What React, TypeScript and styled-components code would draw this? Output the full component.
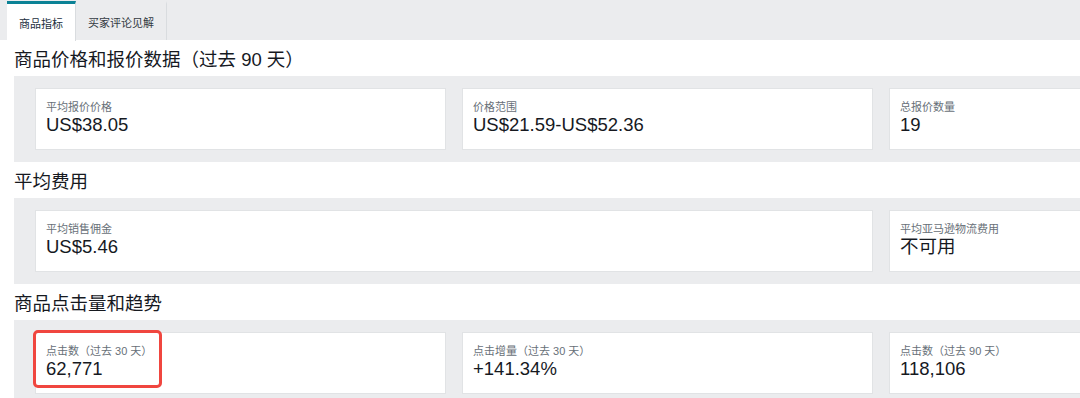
import React from 'react';
import styled, { createGlobalStyle } from 'styled-components';

const colores = {
  gris: '#ebecee',
  borde: '#d9dcdf',
  teal: '#0b8296',
  texto: '#16191f',
  etiqueta: '#687078',
  rojo: '#f0463f',
};

const Global = createGlobalStyle`
  html, body {
    margin: 0;
    padding: 0;
    background: #fff;
    overflow: hidden;
  }
  body {
    font-family: "Liberation Sans", "Noto Sans CJK SC", Arial, sans-serif;
    color: ${colores.texto};
  }
`;

const Pagina = styled.div`
  width: 1335px;
`;

const BarraTabs = styled.div`
  display: flex;
  height: 40px;
  box-sizing: border-box;
  padding: 1px 0 0 7px;
  background: ${colores.gris};
`;

const Tab = styled.div<{ activo?: boolean }>`
  display: flex;
  align-items: center;
  box-sizing: border-box;
  padding: 0 12px;
  font-size: 11px;
  color: ${(p) => (p.activo ? '#232f3e' : '#333a42')};
  background: ${(p) => (p.activo ? '#fff' : 'transparent')};
  border-top: 3px solid ${(p) => (p.activo ? colores.teal : 'transparent')};
  border-right: 1px solid ${colores.borde};
  margin-bottom: ${(p) => (p.activo ? '-1px' : '0')};
`;

const Contenido = styled.div`
  padding: 0 14px;
`;

const Titulo = styled.h2`
  margin: 0;
  height: 36px;
  display: flex;
  align-items: center;
  font-size: 18.5px;
  font-weight: 400;
  color: ${colores.texto};
`;

const Panel = styled.div`
  background: ${colores.gris};
  padding: 12px 21px;
  display: grid;
  grid-template-columns: repeat(3, 1fr);
  gap: 16px;
`;

const Tarjeta = styled.div<{ span?: number }>`
  position: relative;
  grid-column: span ${(p) => p.span ?? 1};
  height: 62px;
  box-sizing: border-box;
  padding: 11px 10px 0;
  background: #fff;
  border: 1px solid #e1e3e5;
`;

const Etiqueta = styled.div`
  font-size: 11px;
  line-height: 14px;
  color: ${colores.etiqueta};
`;

const Valor = styled.div`
  font-size: 18.5px;
  line-height: 22px;
  color: ${colores.texto};
`;

const Marca = styled.div`
  position: absolute;
  left: -3px;
  top: -3px;
  width: 129px;
  height: 58px;
  box-sizing: border-box;
  border: 3px solid ${colores.rojo};
  border-radius: 5px;
`;

type Dato = { etiqueta: string; valor: string; span?: number; marcado?: boolean };

const secciones: { titulo: string; datos: Dato[] }[] = [
  {
    titulo: '商品价格和报价数据（过去 90 天）',
    datos: [
      { etiqueta: '平均报价价格', valor: 'US$38.05' },
      { etiqueta: '价格范围', valor: 'US$21.59-US$52.36' },
      { etiqueta: '总报价数量', valor: '19' },
    ],
  },
  {
    titulo: '平均费用',
    datos: [
      { etiqueta: '平均销售佣金', valor: 'US$5.46', span: 2 },
      { etiqueta: '平均亚马逊物流费用', valor: '不可用' },
    ],
  },
  {
    titulo: '商品点击量和趋势',
    datos: [
      { etiqueta: '点击数（过去 30 天）', valor: '62,771', marcado: true },
      { etiqueta: '点击增量（过去 30 天）', valor: '+141.34%' },
      { etiqueta: '点击数（过去 90 天）', valor: '118,106' },
    ],
  },
];

export default function App() {
  return (
    <Pagina>
      <Global />
      <BarraTabs>
        <Tab activo>商品指标</Tab>
        <Tab>买家评论见解</Tab>
      </BarraTabs>
      <Contenido>
        {secciones.map((s) => (
          <section key={s.titulo}>
            <Titulo>{s.titulo}</Titulo>
            <Panel>
              {s.datos.map((d) => (
                <Tarjeta key={d.etiqueta} span={d.span}>
                  <Etiqueta>{d.etiqueta}</Etiqueta>
                  <Valor>{d.valor}</Valor>
                  {d.marcado && <Marca />}
                </Tarjeta>
              ))}
            </Panel>
          </section>
        ))}
      </Contenido>
    </Pagina>
  );
}
